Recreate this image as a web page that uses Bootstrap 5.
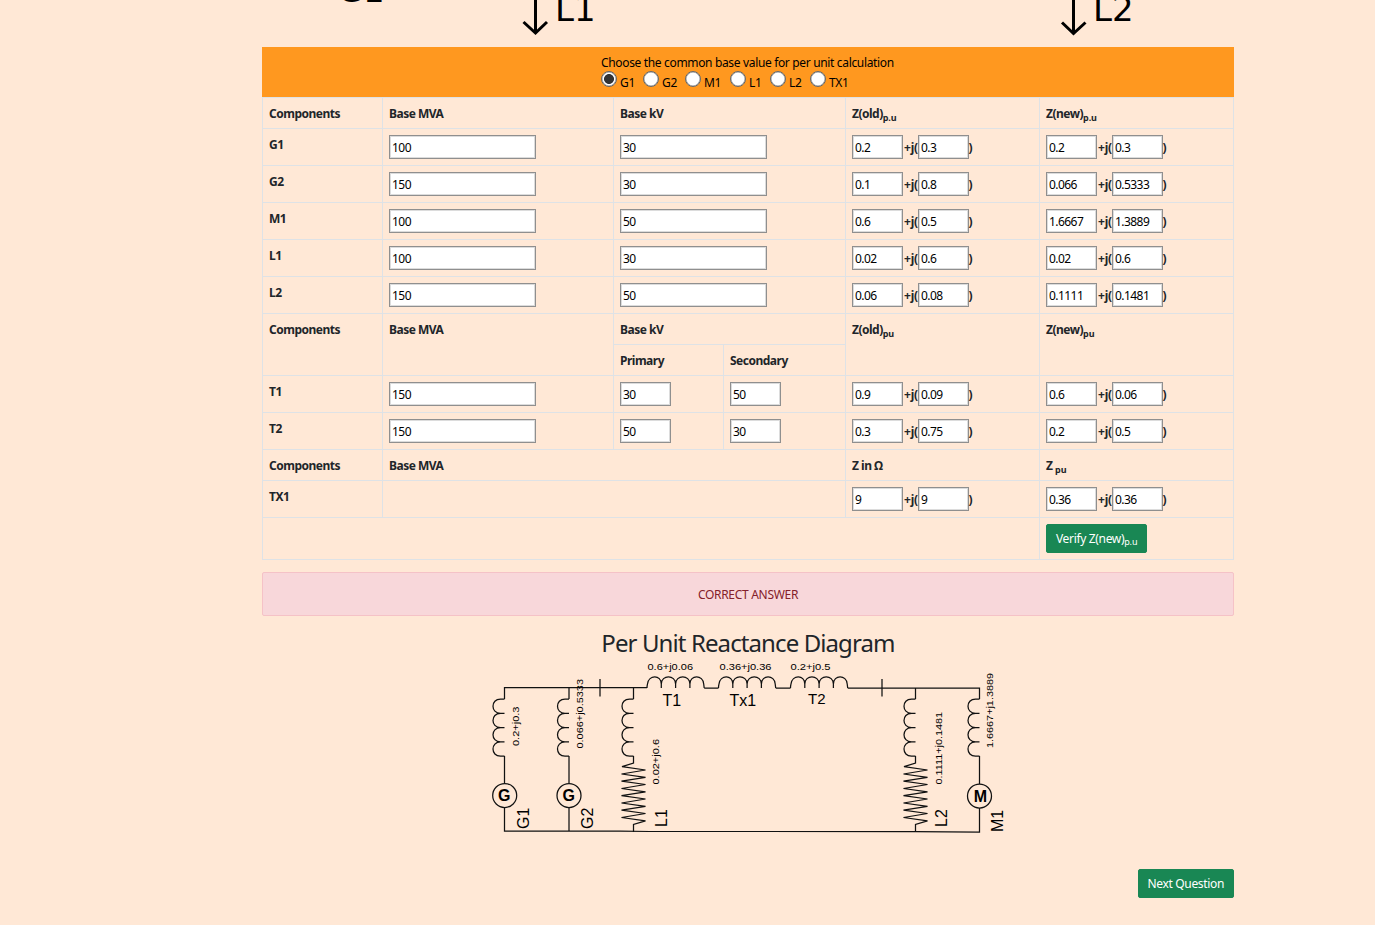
<!DOCTYPE html>
<html lang="en">
<head>
<meta charset="utf-8">
<meta name="viewport" content="width=device-width, initial-scale=1">
<title>Per Unit Reactance Diagram</title>
<link href="https://cdn.jsdelivr.net/npm/bootstrap@5.3.0/dist/css/bootstrap.min.css" rel="stylesheet">
<style>
body{background:#ffe8d6;font-family:"Noto Sans","Open Sans",sans-serif;font-size:12px;line-height:18px;letter-spacing:-.3px;overflow:hidden}
main{width:972px;margin-left:262px}
.source-diagram{height:47px}
.source-diagram svg,.result-diagram svg{display:block}
.base-choice{background:#ff981f;height:50px;color:#000;padding-top:7px}
.choice-inner{width:294px;line-height:17px;white-space:nowrap;letter-spacing:-.34px}
.choice{display:inline-flex;height:18px}
.choice input{appearance:none;width:16px;height:16px;margin:0 3px 0 0;border:1px solid #666;border-radius:50%;background:#fff;box-shadow:inset 0 0 0 .5px #999}
.choice input:checked{background:radial-gradient(circle,#333 0 4.6px,#fff 5.3px)}
.choice span{padding-top:3px}
.values{width:972px;table-layout:fixed;border-color:#dee2e6;margin:0 0 12px;--bs-table-bg:transparent}
.values>tbody>tr>*{padding:7px 6px 5px;height:31px;vertical-align:top;font-weight:700;white-space:nowrap;letter-spacing:-.5px}
.values>tbody>tr.fields>*{height:37px}
.values>tbody>tr.actions>*{height:42px;padding:6px}
.values>tbody>tr:first-child>*{border-top:1px solid #dee2e6}
.values sub,.btn sub{font-size:9px;line-height:0;bottom:-.3em;letter-spacing:-.1px}
.values input{display:block;width:147px;height:24px;margin-top:-1px;padding:1px 1px 1px 2px;border:1px solid #8f8f8f;box-shadow:inset 0 0 0 1px #dcdcdc;background:#fff;color:#000;border-radius:0;font-weight:400;letter-spacing:-.55px}
.values input.short{width:51px}
.z{display:flex;align-items:center}
.z i{font-style:normal;width:15px;padding:0 0 0 1px;letter-spacing:-.2px}
.z i:last-child{width:5px;padding-left:0;margin-left:-.5px}
.btn.act{font-size:12px;line-height:18px;padding:4.5px 9px;height:29px;border-radius:2px;display:block;letter-spacing:-.34px}
.verdict{height:44px;border-radius:2px;padding:13px 12px 11px;margin:0;color:#842029;background:#f8d7da;border-color:#f5c2c7}
.result-title{font-size:24px;line-height:29px;margin:12px 0 3px;font-weight:400;letter-spacing:-.9px}
.result-diagram{height:180px;margin-left:218px}
</style>
</head>
<body>
<main>
  <div class="source-diagram">
    <svg width="972" height="47" viewBox="262 0 972 47" font-family="DejaVu Sans" font-size="34" letter-spacing="0">
      <text x="337.500" y="2">G</text><text x="363" y="2">1</text>
      <text x="555" y="21">L1</text>
      <text x="1093" y="21">L2</text>
      <g fill="none" stroke="#000" stroke-width="3"><path d="M535.500 -2V33M523.500 22L535.500 33L547 22M1073.500 -2V33.500M1062 22.500L1073.500 33.500L1085.500 22.500"/></g>
    </svg>
  </div>
  <div class="base-choice">
    <div class="choice-inner mx-auto">
      <div>Choose the common base value for per unit calculation</div>
      <div class="d-flex">
        <label class="choice" style="width:42px"><input type="radio" name="b" checked><span>G1</span></label>
        <label class="choice" style="width:42px"><input type="radio" name="b"><span>G2</span></label>
        <label class="choice" style="width:45px"><input type="radio" name="b"><span>M1</span></label>
        <label class="choice" style="width:40px"><input type="radio" name="b"><span>L1</span></label>
        <label class="choice" style="width:40px"><input type="radio" name="b"><span>L2</span></label>
        <label class="choice"><input type="radio" name="b"><span>TX1</span></label>
      </div>
    </div>
  </div>
  <table class="table table-bordered values">
    <colgroup><col style="width:120px"><col style="width:231px"><col style="width:110px"><col style="width:122px"><col style="width:194px"><col style="width:194px"></colgroup>
    <tbody id="rows"></tbody>
  </table>
  <div class="alert alert-danger verdict text-center">CORRECT ANSWER</div>
  <h4 class="result-title text-center">Per Unit Reactance Diagram</h4>
  <div class="result-diagram">
    <svg width="540" height="180" viewBox="480 660 540 180" font-family="Liberation Sans" letter-spacing="0">
      <defs>
        <path id="coil" d="M0 0H-4C-14 0 -14 14.300 -4 14.300H0H-4C-14 14.300 -14 28.600 -4 28.600H0H-4C-14 28.600 -14 42.900 -4 42.900H0H-4C-14 42.900 -14 57.200 -4 57.200H0"/>
        <path id="hump" d="M0 0C0 -2 .3 -3 .5 -4C1.500 -13.500 14.300 -13.500 14.300 -4V0V-4C14.300 -13.500 28.600 -13.500 28.600 -4V0V-4C28.600 -13.500 42.900 -13.500 42.900 -4V0V-4C42.900 -13.500 56.200 -13.500 56.700 -4L57.200 0"/>
        <path id="zig" d="M0 0V7L-11.500 10.700L12 14L-12 18L12 21.300L-12 25.200L12 28.500L-12 32.500L12 35.800L-12 39.700L12 43L-12 47L12 50.300L-12 54.200L12 57.500L-12 61.500L12 64.800L0 68.500V76"/>
      </defs>
      <g fill="none" stroke="#111" stroke-width="1.250">
        <path d="M504.500 699V687.500H647M704.200 688H718.500M775.700 688H790.500M847.700 688H979.500V699M569 688V699M633.500 688V699M915.500 688V699M504.500 756V783M569 756V783M979.500 756V784M504.500 808V831H620L650 831.500H915L979.500 832V808M569 808V831M600 679V696.500M882 679V696.500"/>
        <use href="#coil" x="504.500" y="699"/><use href="#coil" x="569" y="699"/><use href="#coil" x="633.500" y="699"/><use href="#coil" x="915.500" y="699"/><use href="#coil" x="979.500" y="699"/>
        <use href="#hump" x="647" y="688"/><use href="#hump" x="718.500" y="688"/><use href="#hump" x="790.500" y="688"/>
        <use href="#zig" x="633.500" y="756"/><use href="#zig" x="915.500" y="756"/>
        <circle cx="504.700" cy="795.500" r="12"/><circle cx="569" cy="795.500" r="12"/><circle cx="979.500" cy="796" r="12"/>
      </g>
      <g font-size="16" font-weight="700" text-anchor="middle"><text x="504.300" y="801">G</text><text x="568.700" y="801">G</text><text x="980.300" y="802">M</text></g>
      <g font-size="16">
        <text x="662.500" y="706">T1</text><text x="729.500" y="706">Tx1</text><text x="808" y="704" font-size="15">T2</text>
        <text transform="translate(529 829)rotate(-90)">G1</text>
        <text transform="translate(593 829)rotate(-90)">G2</text>
        <text transform="translate(667 827)rotate(-90)">L1</text>
        <text transform="translate(947 827)rotate(-90)">L2</text>
        <text transform="translate(1003 832)rotate(-90)">M1</text>
      </g>
      <g font-size="9.500">
        <text x="647.500" y="670" textLength="45.500" lengthAdjust="spacingAndGlyphs">0.6+j0.06</text>
        <text x="719.500" y="670" textLength="52" lengthAdjust="spacingAndGlyphs">0.36+j0.36</text>
        <text x="790.500" y="670" textLength="40" lengthAdjust="spacingAndGlyphs">0.2+j0.5</text>
        <text transform="translate(519 746)rotate(-90)" textLength="39.500" lengthAdjust="spacingAndGlyphs">0.2+j0.3</text>
        <text transform="translate(583 748.500)rotate(-90)" textLength="69.500" lengthAdjust="spacingAndGlyphs">0.066+j0.5333</text>
        <text transform="translate(659 784.500)rotate(-90)" textLength="45.500" lengthAdjust="spacingAndGlyphs">0.02+j0.6</text>
        <text transform="translate(942 784.500)rotate(-90)" textLength="72.500" lengthAdjust="spacingAndGlyphs">0.1111+j0.1481</text>
        <text transform="translate(993 748)rotate(-90)" textLength="75" lengthAdjust="spacingAndGlyphs">1.6667+j1.3889</text>
      </g>
    </svg>
  </div>
  <div class="d-flex justify-content-end" style="margin-top:29px"><button class="btn btn-success act">Next Question</button></div>
</main>
<script>
const field = (v, c = '') => `<input class="${c}" value="${v}">`;
const z = (r, x) => `<td><div class="z">${field(r, 'short')}<i>+j(</i>${field(x, 'short')}<i>)</i></div></td>`;
const machine = (n, mva, kv, a, b, c, d) => `<tr class="fields"><td>${n}</td><td>${field(mva)}</td><td colspan="2">${field(kv)}</td>${z(a, b)}${z(c, d)}</tr>`;
const transformer = (n, mva, p, s, a, b, c, d) => `<tr class="fields"><td>${n}</td><td>${field(mva)}</td><td>${field(p, 'short')}</td><td>${field(s, 'short')}</td>${z(a, b)}${z(c, d)}</tr>`;
document.getElementById('rows').innerHTML =
  '<tr><td>Components</td><td>Base MVA</td><td colspan="2">Base kV</td><td>Z(old)<sub>p.u</sub></td><td>Z(new)<sub>p.u</sub></td></tr>' +
  machine('G1', 100, 30, '0.2', '0.3', '0.2', '0.3') +
  machine('G2', 150, 30, '0.1', '0.8', '0.066', '0.5333') +
  machine('M1', 100, 50, '0.6', '0.5', '1.6667', '1.3889') +
  machine('L1', 100, 30, '0.02', '0.6', '0.02', '0.6') +
  machine('L2', 150, 50, '0.06', '0.08', '0.1111', '0.1481') +
  '<tr><td rowspan="2">Components</td><td rowspan="2">Base MVA</td><td colspan="2">Base kV</td><td rowspan="2">Z(old)<sub>pu</sub></td><td rowspan="2">Z(new)<sub>pu</sub></td></tr>' +
  '<tr><td>Primary</td><td>Secondary</td></tr>' +
  transformer('T1', 150, 30, 50, '0.9', '0.09', '0.6', '0.06') +
  transformer('T2', 150, 50, 30, '0.3', '0.75', '0.2', '0.5') +
  '<tr><td>Components</td><td colspan="3">Base MVA</td><td>Z in Ω</td><td>Z <sub>pu</sub></td></tr>' +
  `<tr class="fields"><td>TX1</td><td colspan="3"></td>${z('9', '9')}${z('0.36', '0.36')}</tr>` +
  '<tr class="actions"><td colspan="5"></td><td><button class="btn btn-success act">Verify Z(new)<sub>p.u</sub></button></td></tr>';
</script>
<script src="https://cdn.jsdelivr.net/npm/bootstrap@5.3.0/dist/js/bootstrap.bundle.min.js"></script>
</body>
</html>
